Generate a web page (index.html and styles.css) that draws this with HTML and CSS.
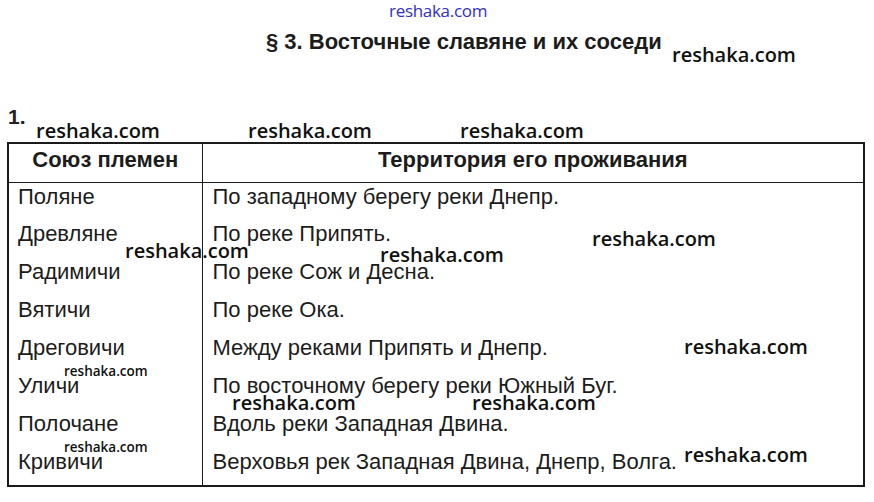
FILE: index.html
```html
<!DOCTYPE html>
<html lang="ru">
<head>
<meta charset="utf-8">
<link rel="stylesheet" href="styles.css">
</head>
<body>
<div class="page">
  <div class="wm wm-top">reshaka.com</div>
  <h1 class="title">§ 3. Восточные славяне и их соседи</h1>
  <div class="num">1.</div>
  <table class="tbl">
    <thead>
      <tr><th class="c1">Союз племен</th><th class="c2">Территория его проживания</th></tr>
    </thead>
    <tbody>
      <tr><td>Поляне</td><td>По западному берегу реки Днепр.</td></tr>
      <tr><td>Древляне</td><td>По реке Припять.</td></tr>
      <tr><td>Радимичи</td><td>По реке Сож и Десна.</td></tr>
      <tr><td>Вятичи</td><td>По реке Ока.</td></tr>
      <tr><td>Дреговичи</td><td>Между реками Припять и Днепр.</td></tr>
      <tr><td>Уличи</td><td>По восточному берегу реки Южный Буг.</td></tr>
      <tr><td>Полочане</td><td>Вдоль реки Западная Двина.</td></tr>
      <tr><td>Кривичи</td><td>Верховья рек Западная Двина, Днепр, Волга.</td></tr>
    </tbody>
  </table>

  <div class="wm wm-big w1">reshaka.com</div>
  <div class="wm wm-big w2">reshaka.com</div>
  <div class="wm wm-big w3">reshaka.com</div>
  <div class="wm wm-big w4">reshaka.com</div>
  <div class="wm wm-big w5">reshaka.com</div>
  <div class="wm wm-big w6">reshaka.com</div>
  <div class="wm wm-big w7">reshaka.com</div>
  <div class="wm wm-big w8">reshaka.com</div>
  <div class="wm wm-big w9">reshaka.com</div>
  <div class="wm wm-big w10">reshaka.com</div>
  <div class="wm wm-big w11">reshaka.com</div>
  <div class="wm wm-small s1">reshaka.com</div>
  <div class="wm wm-small s2">reshaka.com</div>
</div>
</body>
</html>
```

FILE: styles.css
```css
html, body {
  margin: 0;
  padding: 0;
  background: #ffffff;
}

.page {
  position: relative;
  width: 874px;
  height: 502px;
  overflow: hidden;
  font-family: "Liberation Sans", Arial, sans-serif;
  color: #1c1c1c;
}

.title {
  margin: 0;
  padding: 29px 0 0 266px;
  font-size: 22px;
  font-weight: bold;
  line-height: 26px;
  color: #1c1c1c;
}

.num {
  margin: 50px 0 0 8px;
  font-size: 21px;
  font-weight: bold;
  line-height: 24px;
  color: #222;
}

.tbl {
  margin: 13px 0 0 7px;
  width: 858px;
  border-collapse: collapse;
  table-layout: fixed;
  border: 2px solid #1a1a1a;
}

.tbl th,
.tbl td {
  font-size: 22px;
  line-height: 25px;
  text-align: left;
  vertical-align: top;
  border-left: 1.5px solid #1a1a1a;
  border-right: 1.5px solid #1a1a1a;
  white-space: nowrap;
}

.tbl th {
  height: 39px;
  box-sizing: border-box;
  padding: 3px 0 0 0;
  text-align: center;
  font-weight: bold;
  border-bottom: 1.5px solid #1a1a1a;
}

.tbl .c1 { width: 194px; }

.tbl td {
  height: 38px;
  box-sizing: border-box;
  padding: 1px 0 0 9px;
}

.tbl td + td {
  padding-left: 10px;
}

.wm {
  position: absolute;
  white-space: nowrap;
  font-family: "Open Sans", "Liberation Sans", sans-serif;
  color: #111;
}

.wm-top {
  left: 389px;
  top: 0;
  font-size: 17px;
  line-height: 22px;
  color: #3030c8;
  letter-spacing: -0.3px;
}

.wm-big {
  font-size: 20px;
  font-weight: 600;
  line-height: 24px;
}

.wm-small {
  font-size: 13.5px;
  font-weight: 600;
  line-height: 16px;
}

.w1 { left: 672px; top: 43px; }
.w2 { left: 36px; top: 119px; }
.w3 { left: 248px; top: 119px; }
.w4 { left: 460px; top: 119px; }
.w5 { left: 592px; top: 227px; }
.w6 { left: 125px; top: 239px; }
.w7 { left: 380px; top: 243px; }
.w8 { left: 684px; top: 335px; }
.w9 { left: 232px; top: 391px; }
.w10 { left: 472px; top: 391px; }
.w11 { left: 684px; top: 443px; }
.s1 { left: 64px; top: 363px; }
.s2 { left: 64px; top: 439px; }
```
